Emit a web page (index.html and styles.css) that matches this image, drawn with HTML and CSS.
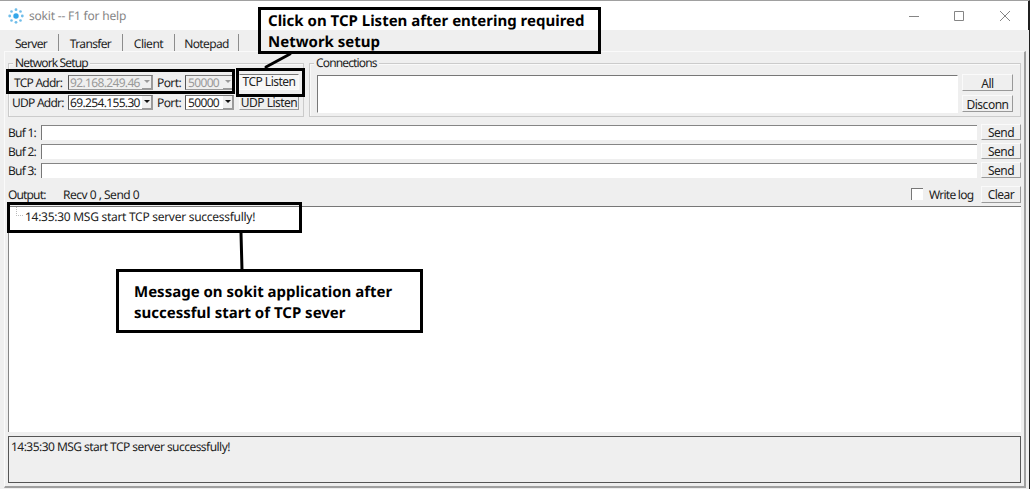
FILE: index.html
```html
<!DOCTYPE html>
<html lang="en">
<head>
<meta charset="utf-8">
<title>sokit -- F1 for help</title>
<link rel="stylesheet" href="styles.css">
</head>
<body>
<div class="window">
  <header class="titlebar">
    <svg class="logo" width="16" height="16" viewBox="0 0 16 16">
      <circle cx="8" cy="8" r="2.7" fill="#35a7ea"/>
      <g fill="#70bde9">
        <circle cx="8" cy="1.7" r="1.4"/><circle cx="12.5" cy="3.5" r="1.3"/>
        <circle cx="14.3" cy="8" r="1.4"/><circle cx="12.5" cy="12.5" r="1.3"/>
        <circle cx="8" cy="14.3" r="1.4"/><circle cx="3.5" cy="12.5" r="1.3"/>
        <circle cx="1.7" cy="8" r="1.4"/><circle cx="3.5" cy="3.5" r="1.3"/>
      </g>
    </svg>
    <span class="title">sokit -- F1 for help</span>
    <svg class="controls" width="108" height="14" viewBox="0 0 108 14" fill="none" stroke="#858585">
      <path d="M1 7.5H11M46.500 2.500H55.500V11.500H46.500ZM92 2L102 12M102 2L92 12"/>
    </svg>
  </header>
  <nav class="tabs">
    <span class="tab tab-server">Server</span>
    <span class="tab tab-transfer">Transfer</span>
    <span class="tab tab-client">Client</span>
    <span class="tab tab-notepad">Notepad</span>
  </nav>
  <main class="panel">
    <div class="groups">
      <section class="group network">
        <h2 class="legend">Network Setup</h2>
        <div class="net-row tcp">
          <span class="addr-label">TCP Addr:</span>
          <span class="combo addr disabled"><span class="value">92.168.249.46</span><i class="arrow"></i></span>
          <span class="port-label">Port:</span>
          <span class="combo port disabled"><span class="value">50000</span><i class="arrow"></i></span>
          <button class="button listen pressed">TCP Listen</button>
        </div>
        <div class="net-row">
          <span class="addr-label">UDP Addr:</span>
          <span class="combo addr"><span class="value">69.254.155.30</span><i class="arrow"></i></span>
          <span class="port-label">Port:</span>
          <span class="combo port"><span class="value">50000</span><i class="arrow"></i></span>
          <button class="button listen">UDP Listen</button>
        </div>
      </section>
      <section class="group connections">
        <h2 class="legend">Connections</h2>
        <div class="conn-body">
          <div class="conn-list"></div>
          <div class="conn-actions">
            <button class="button">All</button>
            <button class="button">Disconn</button>
          </div>
        </div>
      </section>
    </div>
    <div class="buffers">
      <div class="buf-row"><span class="buf-label">Buf 1:</span><div class="field"></div><button class="button send">Send</button></div>
      <div class="buf-row"><span class="buf-label">Buf 2:</span><div class="field"></div><button class="button send">Send</button></div>
      <div class="buf-row"><span class="buf-label">Buf 3:</span><div class="field"></div><button class="button send">Send</button></div>
    </div>
    <div class="output-row">
      <span class="output-label">Output:</span>
      <span class="counts">Recv 0 , Send 0</span>
      <span class="checkbox"></span>
      <span class="write-log">Write log</span>
      <button class="button clear">Clear</button>
    </div>
    <div class="output"><i class="branch"></i><span class="message">14:35:30 MSG start TCP server successfully!</span></div>
    <div class="status"><span class="status-message">14:35:30 MSG start TCP server successfully!</span></div>
  </main>
  <div class="mark mark-tcp"></div>
  <div class="mark mark-listen"></div>
  <div class="mark mark-message"></div>
  <svg class="connectors" width="1030" height="489" fill="none" stroke="#000" stroke-linecap="round">
    <path d="M290 54L266 67" stroke-width="3"/>
    <path d="M241 233L242 270" stroke-width="3"/>
  </svg>
  <div class="mark note note-setup"><span>Click on TCP Listen after entering required</span><span>Network setup</span></div>
  <div class="mark note note-success"><span>Message on sokit application after</span><span>successful start of TCP sever</span></div>
</div>
</body>
</html>
```
FILE: styles.css
```css
* { box-sizing: border-box; }
body { margin: 0; width: 1030px; height: 489px; overflow: hidden; font-family: "Noto Sans", sans-serif; font-size: 12px; color: #222; text-rendering: geometricPrecision; }
.window { position: relative; width: 1030px; height: 489px; display: flex; flex-direction: column; background: #efefef; border-top: 1px solid #a0a0a0; border-right: 1px solid #202020; white-space: nowrap; }
.titlebar { height: 29px; flex: none; display: flex; align-items: center; background: #fff; padding-left: 8px; border-right: 1px solid #202020; }
.title { margin-left: 5px; font-size: 12px; letter-spacing: -0.2px; color: #858585; }
.controls { margin-left: auto; margin-right: 12px; }
.tabs { height: 21px; flex: none; display: flex; padding: 4px 0 0 4px; }
.tab { height: 17px; line-height: 19px; border-right: 1px solid #8c8c8c; text-align: center; letter-spacing: -0.65px; }
.tab-server { width: 55px; }
.tab-transfer { width: 64px; }
.tab-client { width: 52px; letter-spacing: -0.5px; }
.tab-notepad { width: 64px; }
.panel { flex: none; width: 1022px; height: 437px; margin-left: 4px; padding: 5px 3px 0 3px; display: flex; flex-direction: column; border: 1px solid #fafafa; border-right: 2px solid #a0a0a0; border-bottom: 2px solid #a0a0a0; letter-spacing: -0.5px; }
.groups { display: flex; gap: 5px; height: 61px; padding-top: 6px; flex: none; }
.group { height: 54px; flex: none; border: 1px solid #cbcbcb; box-shadow: inset 1px 1px #f9f9f9; }
.network { width: 296px; }
.connections { width: 712px; }
.legend { font-weight: 400; font-size: 12px; letter-spacing: -0.85px; line-height: 12px; height: 12px; width: max-content; margin: -7px 0 0 4px; padding: 0 2px; background: #efefef; }
.net-row { height: 16px; display: flex; align-items: center; margin-top: 4px; padding-left: 3px; }
.net-row.tcp { margin-top: 5px; padding-left: 5px; }
.addr-label { width: 56px; letter-spacing: -0.75px; }
.tcp .addr-label { width: 54px; }
.combo { height: 15px; display: flex; justify-content: space-between; align-items: center; border: 1px solid #9b9b9b; border-left-color: #555; border-top-color: #777; background: #fff; padding-left: 1px; letter-spacing: -0.65px; }
.addr { width: 85px; }
.port { width: 49px; }
.port .value { padding-left: 1px; }
.disabled { color: #999; background: #efefef; }
.arrow { flex: none; height: 13px; width: 10px; background: #efefef; border-right: 1px solid #999; border-bottom: 1px solid #999; display: flex; align-items: center; justify-content: center; }
.arrow::before { content: ""; border: 3px solid transparent; border-top: 3px solid #111; border-bottom: 0; }
.disabled .arrow::before { border-top-color: #999; }
.port-label { width: 28px; margin-left: 4px; letter-spacing: -0.6px; }
.button { font-family: inherit; font-size: 12px; letter-spacing: -0.5px; color: #222; line-height: 14px; padding: 2px 0 0; border: 1px solid #fafafa; border-right: 1px solid #999; border-bottom: 1px solid #999; background: #efefef; display: flex; align-items: center; justify-content: center; white-space: nowrap; }
.listen { width: 60px; height: 16px; margin-left: 5px; }
.pressed { background: #f7f7f7; border: 1px solid #fafafa; border-top-color: #777; padding: 0; }
.conn-body { display: flex; margin: 6px 6px 0 7px; gap: 4px; }
.conn-list { width: 641px; height: 38px; background: #fff; border: 1px solid #fff; border-left: 1px solid #777; border-top: 1px solid #777; }
.conn-actions { width: 51px; margin-top: -1px; display: flex; flex-direction: column; gap: 4px; }
.conn-actions .button { height: 17px; }
.buffers { display: flex; flex-direction: column; gap: 3px; padding-top: 6px; flex: none; }
.buf-row { height: 16px; display: flex; align-items: center; }
.buf-label { width: 33px; letter-spacing: -0.75px; }
.field { width: 936px; height: 15px; background: #fff; border-top: 1px solid #858585; border-left: 1px solid #777; }
.send { width: 40px; height: 16px; margin-left: 4px; }
.output-row { height: 18px; margin-top: 7px; display: flex; align-items: center; flex: none; }
.output-label { width: 55px; letter-spacing: -0.85px; }
.checkbox { margin-left: auto; width: 12px; height: 12px; background: #fff; border-left: 1px solid #777; border-top: 1px solid #777; }
.write-log { margin-left: 6px; width: 45px; letter-spacing: -0.75px; }
.clear { width: 40px; height: 17px; margin: 0 0 0 7px; }
.output { height: 226px; margin: 3px 0 0; width: 1013px; flex: none; border-left: 1px solid #858585; border-top: 1px solid #777; background: #fff; display: flex; }
.branch { width: 7px; height: 9px; margin-left: 7px; border-left: 1px dotted #bbb; border-bottom: 1px dotted #bbb; }
.message { margin-left: 2px; margin-top: 1px; line-height: 17px; letter-spacing: -0.28px; }
.status { height: 47px; margin-top: 4px; width: 1013px; flex: none; border: 1px solid #555; padding: 1px 2px; line-height: 18px; letter-spacing: -0.54px; }
.mark { position: absolute; border: 3px solid #000; }
.mark-tcp { left: 6px; top: 68px; width: 229px; height: 25px; }
.mark-listen { left: 236px; top: 67px; width: 69px; height: 29px; }
.mark-message { left: 7px; top: 201px; width: 295px; height: 31px; }
.connectors { position: absolute; left: 0; top: -1px; }
.note { display: flex; flex-direction: column; font-size: 15px; font-weight: 700; color: #000; line-height: 21px; }
.note-setup { left: 258px; top: 6px; width: 343px; height: 47px; padding: 1px 7px; background: linear-gradient(#fff 20px, #efefef 20px); }
.note-success { left: 116px; top: 268px; width: 307px; height: 64px; padding: 10px 15px; background: #fff; }
```
